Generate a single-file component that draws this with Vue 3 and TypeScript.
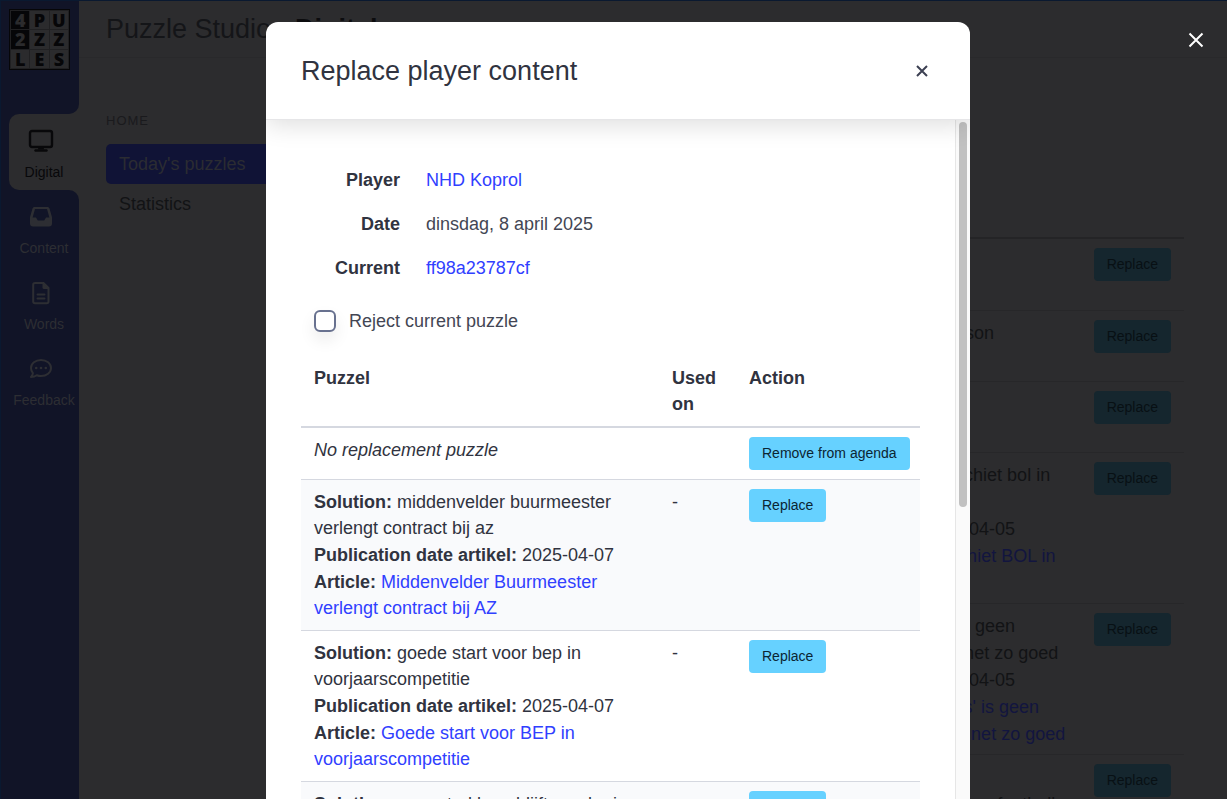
<script setup lang="ts">
import { ref } from 'vue'

interface Tab { id: string; label: string }
interface Candidate { solution: string; date: string; article: string }
interface Line { text: string; link?: boolean; lead?: string }
interface AgendaRow { size: string; lines: Line[] }

const logo: string[] = ['4', 'P', 'U', '2', 'Z', 'Z', 'L', 'E', 'S']
const tabs: Tab[] = [
  { id: 'digital', label: 'Digital' },
  { id: 'content', label: 'Content' },
  { id: 'words', label: 'Words' },
  { id: 'feedback', label: 'Feedback' },
]
const candidates: Candidate[] = [
  { solution: 'middenvelder buurmeester verlengt contract bij az', date: '2025-04-07', article: 'Middenvelder Buurmeester verlengt contract bij AZ' },
  { solution: 'goede start voor bep in voorjaarscompetitie', date: '2025-04-07', article: 'Goede start voor BEP in voorjaarscompetitie' },
  { solution: 'na vertrekkers blijft zonder in wedstrijden', date: '2025-04-07', article: 'Na vertrekkers blijft zonder in wedstrijden' },
]
const agenda: AgendaRow[] = [
  { size: 'first', lines: [] },
  { size: 'short', lines: [{ lead: 'Solution: ', text: 'een winnaar is anderson' }] },
  { size: 'short', lines: [] },
  { size: 'tall', lines: [
    { lead: 'Solution: ', text: 'de keeper van ajax schiet bol in' },
    { text: 'de kruising' },
    { lead: 'Publication date artikel: ', text: '2025-04-05' },
    { lead: 'Article: ', text: 'De keeper voor Ajax schiet BOL in', link: true },
    { text: 'de kruising', link: true },
  ] },
  { size: 'tall', lines: [
    { lead: 'Solution: ', text: 'winst van de teams is geen' },
    { text: 'verrassing, want de rest speelt net zo goed' },
    { lead: 'Publication date artikel: ', text: '2025-04-05' },
    { lead: 'Article: ', text: "Winst voor onze 'Teams' is geen", link: true },
    { text: 'verrassing, maar die rest speelt net zo goed', link: true },
  ] },
  { size: 'tall', lines: [
    { lead: 'Solution: ', text: 'de jeugd speelt' },
    { text: 'want de ouders kijken samen weer football' },
  ] },
]
const reject = ref(false)
</script>

<template>
  <div class="page">
    <aside class="sidebar">
      <div class="brand">
        <div class="logo">
          <span v-for="(c, i) in logo" :key="i" :class="{ inverse: c === '4' || c === '2' }">{{ c }}</span>
        </div>
      </div>
      <nav class="tabs">
        <a v-for="t in tabs" :key="t.id" href="#" class="tab" :class="{ active: t.id === 'digital' }">
          <svg v-if="t.id === 'digital'" viewBox="0 0 26 24" width="26" height="24">
            <rect x="2" y="2" width="22" height="16" rx="2" fill="none" stroke="currentColor" stroke-width="2.4" />
            <path d="M10.500 18h5l.6 2.500h-6.200z" fill="currentColor" />
            <path d="M7.500 21.500h11" stroke="currentColor" stroke-width="2.400" stroke-linecap="round" />
          </svg>
          <svg v-else-if="t.id === 'content'" viewBox="0 0 26 24" width="26" height="24">
            <path fill="currentColor" fill-rule="evenodd" d="M6.600 2h12.800c1 0 1.800.6 2.100 1.500L24 12.300V18.500a3 3 0 0 1-3 3H5a3 3 0 0 1-3-3v-6.200L4.500 3.500C4.800 2.600 5.600 2 6.600 2zM7 4L4.600 12.500H8l1.800 3h6.400l1.800-3h3.400L19 4z" />
          </svg>
          <svg v-else-if="t.id === 'words'" viewBox="0 0 26 24" width="26" height="24">
            <path d="M7 2h8.500L20.500 7v13.500a1.800 1.800 0 0 1-1.800 1.800H7a1.800 1.800 0 0 1-1.800-1.800V3.800A1.800 1.800 0 0 1 7 2z" fill="none" stroke="currentColor" stroke-width="2" />
            <path d="M14.500 1.500v5a1.500 1.500 0 0 0 1.500 1.500h5z" fill="currentColor" />
            <path d="M9.500 13.500h7M9.500 17.500h7" stroke="currentColor" stroke-width="2" stroke-linecap="round" />
          </svg>
          <svg v-else viewBox="0 0 26 24" width="26" height="24">
            <path d="M13 3c5.600 0 10 3.500 10 8s-4.400 8-10 8c-1.500 0-3-.3-4.300-.8C7.300 19.300 5.300 20 3 20c1.200-1.200 1.800-2.500 1.900-3.800C3.700 14.800 3 13 3 11c0-4.500 4.400-8 10-8z" fill="none" stroke="currentColor" stroke-width="2" stroke-linejoin="round" />
            <circle cx="8.200" cy="11" r="1.300" fill="currentColor" /><circle cx="13" cy="11" r="1.300" fill="currentColor" /><circle cx="17.800" cy="11" r="1.300" fill="currentColor" />
          </svg>
          <span>{{ t.label }}</span>
        </a>
      </nav>
      <div class="rest"></div>
    </aside>
    <div class="main">
      <header class="top">
        <h1>Puzzle Studio - <b>Digital</b></h1>
        <span class="sub">Today: Germany Main</span>
      </header>
      <div class="columns">
        <nav class="menu">
          <h2>HOME</h2>
          <a href="#" class="current">Today's puzzles</a>
          <a href="#">Statistics</a>
        </nav>
        <table class="agenda">
          <tbody>
            <tr v-for="(row, i) in agenda" :key="i" :class="row.size">
              <td>
                <div class="fields">
                  <div v-for="(l, j) in row.lines" :key="j">
                    <strong v-if="l.lead">{{ l.lead }}</strong><a v-if="l.link" href="#">{{ l.text }}</a><template v-else>{{ l.text }}</template>
                  </div>
                </div>
              </td>
              <td class="act"><button type="button" class="btn">Replace</button></td>
            </tr>
          </tbody>
        </table>
      </div>
    </div>

    <div class="overlay">
      <section class="modal" role="dialog" aria-labelledby="dlg-title">
        <header class="modal-head">
          <h2 id="dlg-title">Replace player content</h2>
          <button type="button" class="close" aria-label="Close dialog">
            <svg viewBox="0 0 12 12" width="12" height="12"><path d="M1 1l10 10M11 1L1 11" stroke="currentColor" stroke-width="2" /></svg>
          </button>
        </header>
        <div class="modal-main">
          <div class="modal-body">
            <dl>
              <dt>Player</dt><dd><a href="#">NHD Koprol</a></dd>
              <dt>Date</dt><dd>dinsdag, 8 april 2025</dd>
              <dt>Current</dt><dd><a href="#">ff98a23787cf</a></dd>
            </dl>
            <label class="reject"><input v-model="reject" type="checkbox" /><span>Reject current puzzle</span></label>
            <table class="choices">
              <colgroup><col /><col class="used" /><col class="action" /></colgroup>
              <thead><tr><th>Puzzel</th><th>Used on</th><th>Action</th></tr></thead>
              <tbody>
                <tr>
                  <td><em>No replacement puzzle</em></td><td></td>
                  <td><button type="button" class="btn">Remove from agenda</button></td>
                </tr>
                <tr v-for="c in candidates" :key="c.solution">
                  <td>
                    <div class="fields">
                      <div><strong>Solution:</strong> {{ c.solution }}</div>
                      <div><strong>Publication date artikel:</strong> {{ c.date }}</div>
                      <div><strong>Article:</strong> <a href="#">{{ c.article }}</a></div>
                    </div>
                  </td>
                  <td>-</td>
                  <td><button type="button" class="btn">Replace</button></td>
                </tr>
              </tbody>
            </table>
          </div>
          <div class="track"><div class="thumb"></div></div>
        </div>
      </section>
      <button type="button" class="dismiss" aria-label="Close">
        <svg viewBox="0 0 16 16" width="16" height="16"><path d="M1.500 1.500l13 13M14.500 1.500l-13 13" stroke="currentColor" stroke-width="2" /></svg>
      </button>
    </div>
  </div>
</template>

<style>
body { margin: 0; background: #2c2c2e; }
</style>

<style scoped>
* { box-sizing: border-box; }
.page {
  position: relative;
  display: flex;
  height: 100vh;
  overflow: hidden;
  background: #2c2c2e;
  border-top: 1px solid #0a1930;
  border-left: 1px solid #0a1930;
  color: #121315;
  font: 18px/26px "Liberation Sans", Arial, sans-serif;
}
a { color: inherit; text-decoration: none; }
h1, h2, dl, dd { margin: 0; font-weight: 400; }
button { font: inherit; border: 0; cursor: pointer; }

.sidebar { width: 78px; flex: none; display: flex; flex-direction: column; background: #2c2c2e; }
.brand { height: 113px; padding: 8px; background: #111427; border-bottom-right-radius: 10px; }
.logo {
  display: grid;
  grid-template-columns: repeat(3, 1fr);
  gap: 1px;
  width: 61px;
  height: 61px;
  padding: 1px;
  border: 1px solid #060608;
  background: #202022;
}
.logo span { display: flex; align-items: center; justify-content: center; background: #2b2b2d; color: #060608; font: 800 18px/18px "Open Sans", sans-serif; }
.logo .inverse { background: #060608; color: #2b2b2d; }
.tabs { background: linear-gradient(to right, #111427 50%, #2c2c2e 50%); }
.tab { display: flex; flex-direction: column; align-items: center; gap: 7px; height: 76px; padding: 15px 0 0 8px; color: #2d2e33; font-size: 14px; line-height: 24px; }
.tab svg { margin-right: 6px; }
.tab.active { margin-left: 8px; padding-left: 0; background: #2c2c2e; border-radius: 10px 0 0 10px; color: #08080a; }
.tab:not(.active) { background: #111427; }
.tab:nth-child(2) { border-top-right-radius: 10px; }
.rest { flex: 1; background: #111427; }

.main { flex: 1; min-width: 0; }
.top { display: flex; align-items: center; gap: 24px; height: 57px; padding-left: 27px; border-bottom: 1px solid #29292b; white-space: nowrap; }
.top h1 { font-size: 27px; color: #141518; }
.top b { color: #0c0c0e; }
.sub { color: #1a1a1c; }
.columns { display: flex; justify-content: space-between; padding: 0 43px 0 27px; }
.menu { width: 240px; padding-top: 50px; }
.menu h2 { font-size: 13px; letter-spacing: 1px; margin-bottom: 10px; color: #1a1a1d; }
.menu a { display: block; height: 40px; padding: 7px 13px; border-radius: 5px; }
.menu .current { background: #101336; color: #2b2c32; }
.agenda { width: 482px; margin-top: 179px; border-collapse: separate; border-spacing: 0; align-self: flex-start; }
.agenda td { padding: 9px 13px 7px; border-top: 1px solid #272729; vertical-align: top; white-space: nowrap; }
.agenda .first td { border-top: 2px solid #242426; }
.agenda .first { height: 73px; }
.agenda .short { height: 71px; }
.agenda .tall { height: 151px; }
.agenda .act { width: 102px; }
.agenda a { color: #12153f; }
.agenda .btn { background: #15262e; color: #081014; }

.btn { display: block; height: 33px; padding: 0 13px; border-radius: 4px; background: #66d1ff; color: #0b2533; font-size: 14px; line-height: 33px; white-space: nowrap; }

.overlay { position: absolute; inset: 0; display: flex; justify-content: center; padding: 21px 0 0 8px; }
.modal { display: flex; flex-direction: column; width: 704px; max-width: 100%; background: #fff; border-radius: 12px 12px 0 0; color: #434654; overflow: hidden; }
.modal a { color: #3040ff; }
.modal-head { display: flex; align-items: center; justify-content: space-between; height: 98px; flex: none; padding: 0 36px 0 35px; border-bottom: 1px solid #e6e6e8; box-shadow: 0 4px 24px rgba(0, 0, 0, .14); position: relative; }
.modal-head h2 { color: #303340; font-size: 27px; line-height: 32px; }
.close, .dismiss { display: flex; padding: 6px; background: none; color: #3c4052; }
.dismiss { position: absolute; top: 25px; right: 17px; color: #fff; }
.modal-main { display: flex; flex: 1; min-height: 0; }
.modal-body { flex: 1; min-width: 0; padding: 38px 35px 0; overflow: hidden; }
.track { width: 15px; padding: 2px 3px; background: #fafafa; border-left: 1px solid #e6e6e6; }
.thumb { width: 8px; height: 57%; border-radius: 4px; background: #c1c1c1; }
dl { display: grid; grid-template-columns: 112px 1fr; }
dt, dd { padding: 9px 13px; }
dt { text-align: right; font-weight: 700; color: #303340; }
.reject { display: flex; align-items: center; gap: 13px; margin: 18px 13px 22px; width: max-content; }
.reject input { appearance: none; width: 22px; height: 22px; margin: 0; border: 2px solid #68718f; border-radius: 6px; background: #fff; box-shadow: 0 8px 16px rgba(0, 0, 0, .08); }
.choices { width: 100%; table-layout: fixed; border-collapse: separate; border-spacing: 0; color: #303340; }
.choices .used { width: 77px; }
.choices .action { width: 184px; }
.choices th, .choices td { padding: 9px 13px; text-align: left; vertical-align: top; }
.choices th { border-bottom: 2px solid #d5d8e0; }
.choices td { border-bottom: 1px solid #d5d8e0; }
.choices tbody tr:nth-child(even) { background: #f9fafc; }
.fields { display: grid; gap: 1px; }
</style>
